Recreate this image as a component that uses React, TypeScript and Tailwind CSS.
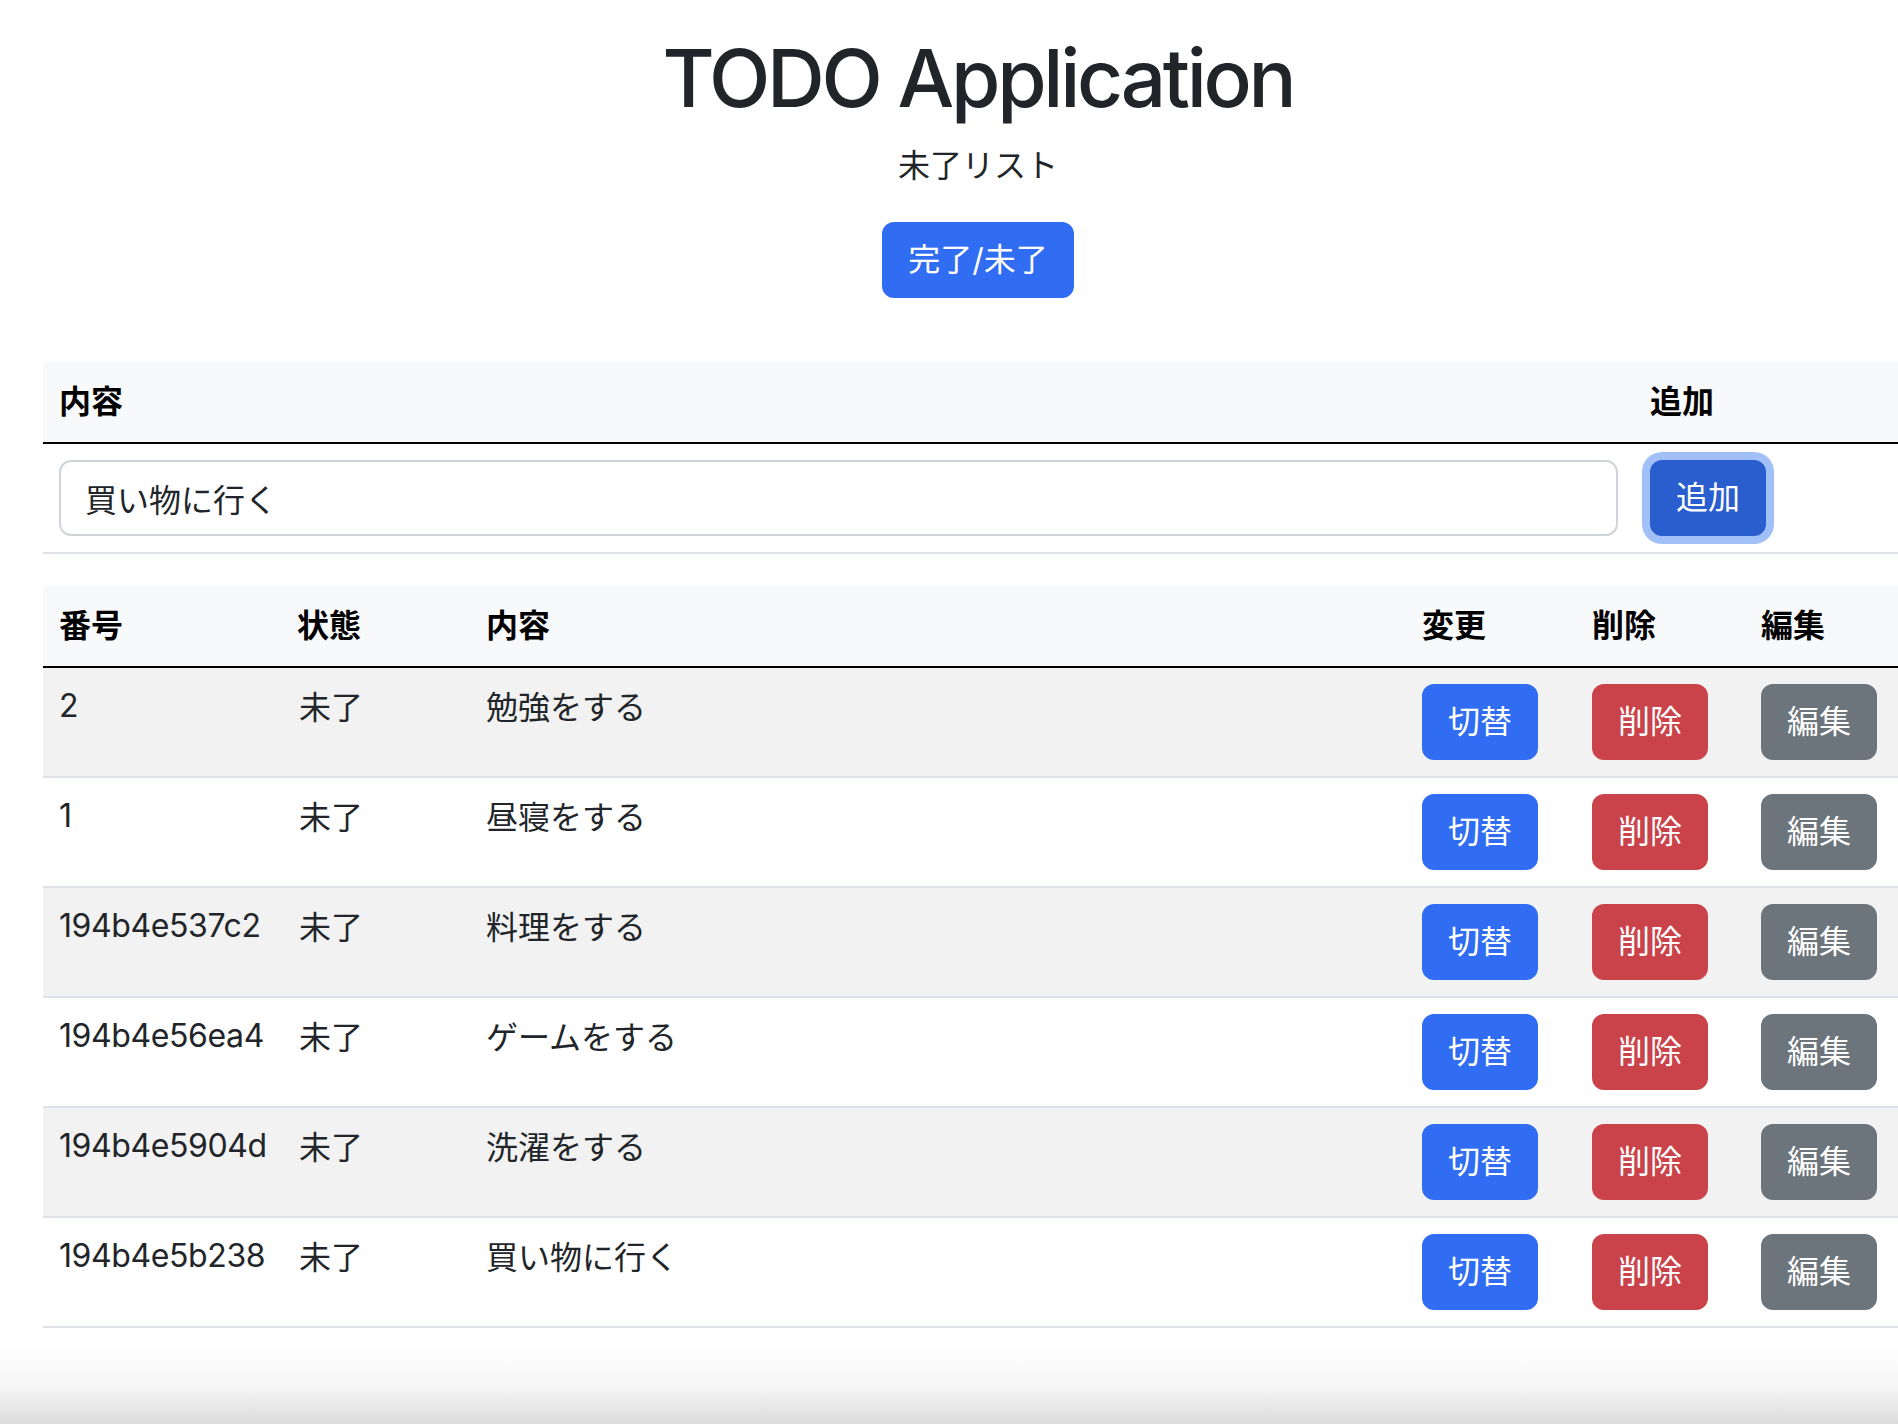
import React from "react";

const rows = [
  { id: "2", status: "未了", content: "勉強をする" },
  { id: "1", status: "未了", content: "昼寝をする" },
  { id: "194b4e537c2", status: "未了", content: "料理をする" },
  { id: "194b4e56ea4", status: "未了", content: "ゲームをする" },
  { id: "194b4e5904d", status: "未了", content: "洗濯をする" },
  { id: "194b4e5b238", status: "未了", content: "買い物に行く" },
];

export default function App() {
  return (
    <div className="w-[1898px] h-[1424px] overflow-hidden bg-white flex flex-col font-['Inter','Noto_Sans_CJK_JP',sans-serif] text-[#212529] text-[32px] leading-[48px]">
      <div className="ml-[43px] w-[1870px] pt-[30px] shrink-0">
        <h1 className="text-center text-[80px] leading-[96px] font-medium tracking-[-3.3px] mb-[16px]">
          TODO Application
        </h1>
        <p className="text-center mb-[32px]">未了リスト</p>
        <div className="flex justify-center mb-[64px]">
          <button className="h-[76px] px-[24px] border-2 border-[#306df3] rounded-[12px] bg-[#306df3] text-white">
            完了/未了
          </button>
        </div>

        <table className="w-full table-fixed border-collapse mb-[32px]">
          <colgroup>
            <col className="w-[1591px]" />
            <col className="w-[279px]" />
          </colgroup>
          <thead>
            <tr className="bg-[#f8f9fa]">
              <th className="text-left font-bold text-black p-[16px] border-b-2 border-black">内容</th>
              <th className="text-left font-bold text-black p-[16px] border-b-2 border-black">追加</th>
            </tr>
          </thead>
          <tbody>
            <tr>
              <td className="p-[16px] align-top border-b-2 border-[#dee2e6]">
                <input
                  defaultValue="買い物に行く"
                  className="block w-full h-[76px] px-[24px] border-2 border-[#ced4da] rounded-[12px] text-[32px] leading-[48px] text-[#212529] bg-white outline-none"
                />
              </td>
              <td className="p-[16px] align-top border-b-2 border-[#dee2e6]">
                <button className="h-[76px] px-[24px] border-2 border-[#2a5dce] rounded-[12px] bg-[#2a5dce] text-white ring-8 ring-[#a2c0f8]">
                  追加
                </button>
              </td>
            </tr>
          </tbody>
        </table>

        <table className="w-full table-fixed border-collapse">
          <colgroup>
            <col className="w-[238px]" />
            <col className="w-[189px]" />
            <col className="w-[936px]" />
            <col className="w-[170px]" />
            <col className="w-[169px]" />
            <col className="w-[168px]" />
          </colgroup>
          <thead>
            <tr className="bg-[#f8f9fa]">
              {["番号", "状態", "内容", "変更", "削除", "編集"].map((h) => (
                <th key={h} className="text-left font-bold text-black p-[16px] border-b-2 border-black">
                  {h}
                </th>
              ))}
            </tr>
          </thead>
          <tbody>
            {rows.map((r, i) => (
              <tr key={r.id} className={i % 2 === 0 ? "bg-[#f2f2f2]" : "bg-white"}>
                <td className="p-[16px] align-top border-b-2 border-[#dee2e6] whitespace-nowrap tracking-[-0.4px] leading-[44px]">{r.id}</td>
                <td className="p-[16px] pl-[18px] align-top border-b-2 border-[#dee2e6]">{r.status}</td>
                <td className="p-[16px] align-top border-b-2 border-[#dee2e6]">{r.content}</td>
                <td className="p-[16px] align-top border-b-2 border-[#dee2e6]">
                  <button className="h-[76px] px-[24px] border-2 border-[#306df3] rounded-[12px] bg-[#306df3] text-white">
                    切替
                  </button>
                </td>
                <td className="p-[16px] align-top border-b-2 border-[#dee2e6]">
                  <button className="h-[76px] px-[24px] border-2 border-[#cb434a] rounded-[12px] bg-[#cb434a] text-white">
                    削除
                  </button>
                </td>
                <td className="p-[16px] align-top border-b-2 border-[#dee2e6]">
                  <button className="h-[76px] px-[24px] border-2 border-[#6d757c] rounded-[12px] bg-[#6d757c] text-white">
                    編集
                  </button>
                </td>
              </tr>
            ))}
          </tbody>
        </table>
      </div>
      <div className="flex-1 bg-linear-to-b from-white from-15% via-[#f6f6f6] via-60% to-[#dcdcdc]" />
    </div>
  );
}
